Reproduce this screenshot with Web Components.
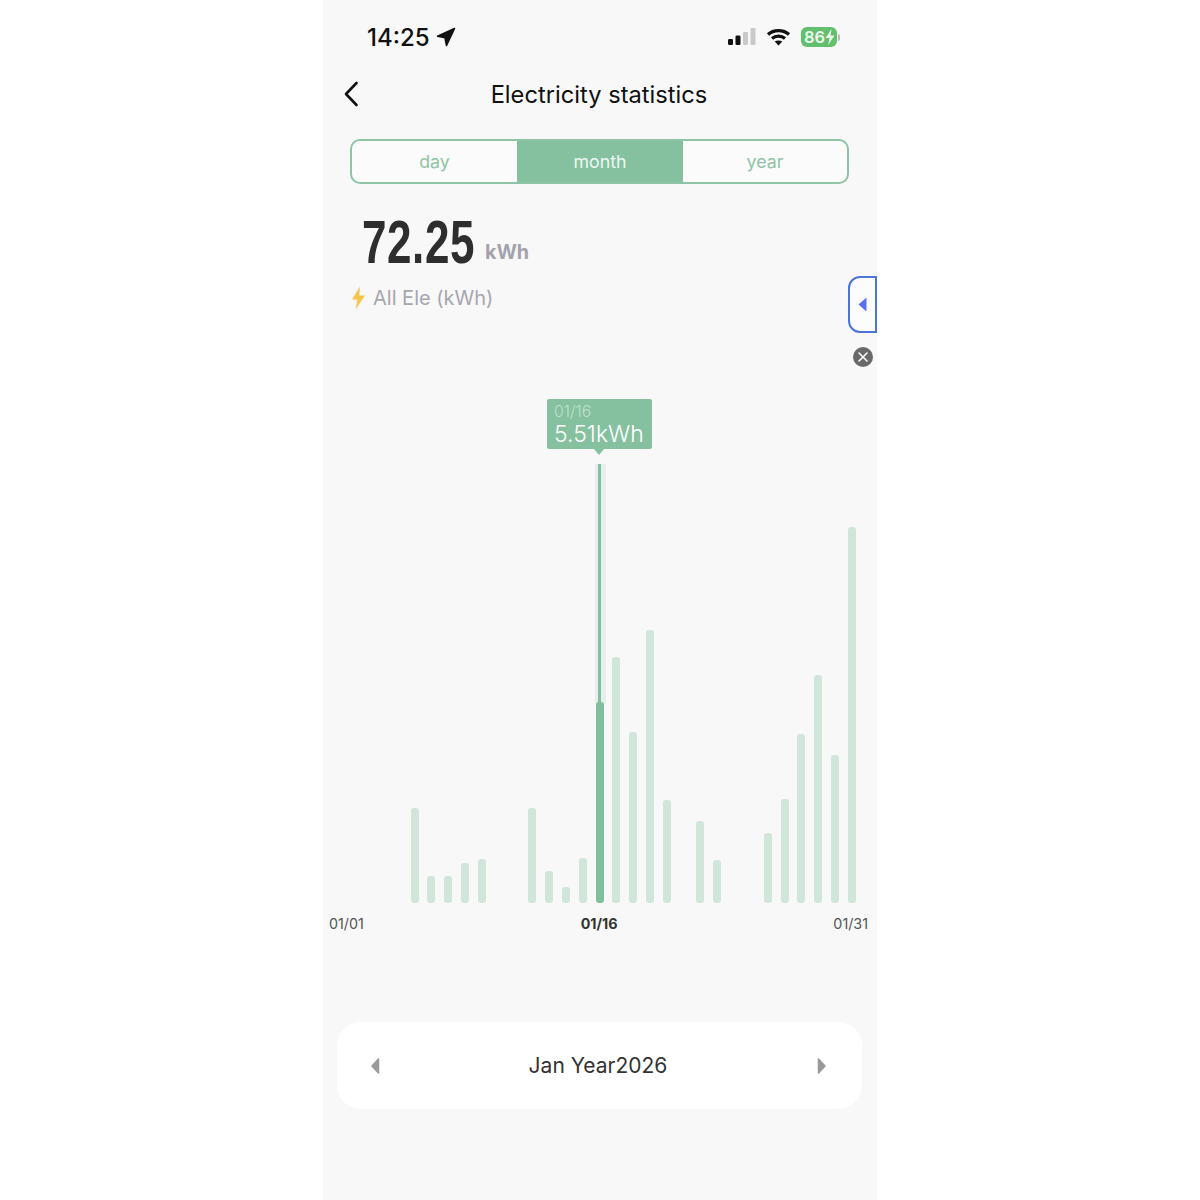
<!DOCTYPE html>
<html lang="en">
<head>
<meta charset="utf-8">
<title>Electricity statistics</title>
<style>
  html, body { margin: 0; background: #fff; }
  body { font-family: Inter, "Noto Sans", sans-serif; }
</style>
</head>
<body>
<phone-screen>
  <status-bar></status-bar>
  <nav-bar>Electricity statistics</nav-bar>
  <seg-tabs items="day,month,year" active="1"></seg-tabs>
  <stat-total value="72.25" unit="kWh" label="All Ele (kWh)"></stat-total>
  <side-tab></side-tab>
  <bar-chart></bar-chart>
  <month-picker>Jan Year2026</month-picker>
</phone-screen>

<script>
class PhoneScreen extends HTMLElement {
    constructor() {
        super();
        this.attachShadow({ mode: 'open' });
        this.shadowRoot.innerHTML = `
            <style>
                :host { display: block; position: relative; width: 554px; height: 1200px; margin: 0 auto; background: #f8f8f8; overflow: hidden; }
            </style>
            <slot></slot>
        `;
    }
}

class StatusBar extends HTMLElement {
    constructor() {
        super();
        this.attachShadow({ mode: 'open' });
        this.shadowRoot.innerHTML = `
            <style>
                :host { display: flex; align-items: center; justify-content: space-between; height: 74px; padding: 0 37px 0 44px; color: #111; }
                .left, .right { display: flex; align-items: center; }
                .time { font-size: 24px; font-weight: 500; letter-spacing: 0; }
                .left svg { margin-left: 6px; }
                .right svg.wifi { margin: 0 10px 0 10px; }
                .batt { display: flex; align-items: center; }
                .pill { width: 36px; height: 20px; border-radius: 6px; background: #62bf6e; color: #eaf7ec; font-size: 16.500px; font-weight: 600; line-height: 20px; padding-left: 3px; box-sizing: border-box; overflow: hidden; white-space: nowrap; display: flex; align-items: center; }
                .nub { width: 2px; height: 7px; background: #bbb; border-radius: 0 2px 2px 0; margin-left: 1px; }
            </style>
            <div class="left">
                <span class="time">14:25</span>
                <svg width="20" height="20" viewBox="0 0 20 20"><path d="M18.500 1.500 L1.500 9.200 L9 10.800 L10.500 18.500 Z" fill="#111" stroke="#111" stroke-width="1.600" stroke-linejoin="round"/></svg>
            </div>
            <div class="right">
                <svg width="28" height="18" viewBox="0 0 28 18">
                    <rect x="0" y="11" width="5" height="6" rx="1.2" fill="#111"/>
                    <rect x="7.500" y="7.500" width="5" height="9.500" rx="1.200" fill="#111"/>
                    <rect x="15" y="4" width="5" height="13" rx="1.200" fill="#c9c9c9"/>
                    <rect x="22.500" y="0" width="5" height="17" rx="1.200" fill="#c9c9c9"/>
                </svg>
                <svg class="wifi" width="25" height="18" viewBox="0 0 24 18" fill="none" stroke="#111" stroke-width="3.200">
                    <path d="M1.500 6.500 C7 1.200 17 1.200 22.500 6.500"/>
                    <path d="M5.500 10.500 C9 7.300 15 7.300 18.500 10.500"/>
                    <path d="M12 17.500 L8.200 13.600 C10.300 12 13.700 12 15.800 13.600 Z" fill="#111" stroke="none"/>
                </svg>
                <div class="batt">
                    <div class="pill">86<svg width="10" height="16" viewBox="0 0 10 16"><path d="M6.500 0 L0.500 9 L4.500 9 L3.200 16 L9.500 6.500 L5.500 6.500 Z" fill="#eaf7ec"/></svg></div>
                    <div class="nub"></div>
                </div>
            </div>
        `;
    }
}

class NavBar extends HTMLElement {
    constructor() {
        super();
        this.attachShadow({ mode: 'open' });
        this.shadowRoot.innerHTML = `
            <style>
                :host { display: grid; grid-template-columns: 60px 1fr 60px; align-items: center; height: 40px; color: #111; }
                svg { margin-left: 20px; }
                .title { text-align: center; font-size: 23.700px; font-weight: 400; margin: 0 2px 0 0; }
            </style>
            <svg width="16" height="28" viewBox="0 0 16 28" fill="none" stroke="#111" stroke-width="2.600" stroke-linecap="round" stroke-linejoin="round"><path d="M13.500 3 L3 14 L13.500 25"/></svg>
            <div class="title"><slot></slot></div>
            <span></span>
        `;
    }
}

class SegTabs extends HTMLElement {
    constructor() {
        super();
        this.attachShadow({ mode: 'open' });
        const active = Number(this.getAttribute('active') || 0);
        const items = (this.getAttribute('items') || '').split(',');
        this.shadowRoot.innerHTML = `
            <style>
                :host { display: grid; grid-template-columns: 165px 166px 164px; height: 45px; box-sizing: border-box; margin: 25px 28px 0 27px; border: 2px solid #8fc4a6; border-radius: 10px; overflow: hidden; background: #fbfbfb; }
                div { display: flex; align-items: center; justify-content: center; font-size: 17.800px; color: #8fc4a6; }
                div.on { background: #85c19f; color: #eef7f2; }
            </style>
            ${items.map((t, i) => `<div class="${i === active ? 'on' : ''}">${t}</div>`).join('')}
        `;
    }
}

class StatTotal extends HTMLElement {
    constructor() {
        super();
        this.attachShadow({ mode: 'open' });
        this.shadowRoot.innerHTML = `
            <style>
                :host { display: block; padding: 28px 0 0 28px; height: 158px; box-sizing: border-box; }
                .row { display: flex; align-items: flex-end; height: 60px; padding-left: 11px; }
                .num { display: inline-block; width: 112px; font-family: "Liberation Sans", sans-serif; font-size: 62px; line-height: 60px; font-weight: 700; color: #2e2e2e; transform: scaleX(.71); transform-origin: left bottom; white-space: nowrap; letter-spacing: .8px; }
                .unit { margin-left: 11px; font-size: 19.700px; font-weight: 700; color: #a3a3ad; line-height: 30px; margin-bottom: 5px; }
                .label { display: flex; align-items: center; height: 30px; margin-top: 11px; font-size: 20px; color: #a6a6ae; }
                svg { margin-right: 7px; }
            </style>
            <div class="row"><span class="num">${this.getAttribute('value')}</span><span class="unit">${this.getAttribute('unit')}</span></div>
            <div class="label">
                <svg width="15" height="24" viewBox="0 0 15 24"><path d="M9 0.500 L1 13.500 L6.500 13.500 L4.500 23.500 L14 9.500 L8.200 9.500 Z" fill="#f7c545"/></svg>
                ${this.getAttribute('label')}
            </div>
        `;
    }
}

class SideTab extends HTMLElement {
    constructor() {
        super();
        this.attachShadow({ mode: 'open' });
        this.shadowRoot.innerHTML = `
            <style>
                :host { display: block; position: absolute; right: 0; top: 276px; width: 29px; height: 92px; }
                .tab { width: 29px; height: 57px; box-sizing: border-box; border: 2px solid #4c74d9; border-radius: 12px 0 0 12px; display: flex; align-items: center; justify-content: center; background: #fcfcfc; }
                .close { position: absolute; left: 5px; top: 71px; }
            </style>
            <div class="tab"><svg width="9" height="15" viewBox="0 0 9 15"><path d="M8.500 0.500 L0.500 7.500 L8.500 14.500 Z" fill="#5a6cf0"/></svg></div>
            <svg class="close" width="20" height="20" viewBox="0 0 20 20"><circle cx="10" cy="10" r="10" fill="#696969"/><path d="M6 6 L14 14 M14 6 L6 14" stroke="#fff" stroke-width="1.600" stroke-linecap="round"/></svg>
        `;
    }
}

class BarChart extends HTMLElement {
    constructor() {
        super();
        this.attachShadow({ mode: 'open' });
        // bar height in px per day, 0 = no reading
        const heights = [0,0,0,0,95,27,27,40,44,0,0,95,32,16,45,201,246,171,273,103,0,82,43,0,0,70,104,169,228,148,376];
        const selected = 15;
        this.shadowRoot.innerHTML = `
            <style>
                :host { display: block; position: relative; }
                .plot { position: relative; display: grid; grid-template-columns: repeat(31, 16.82px); align-items: end; height: 561px; padding-left: 16px; }
                .cell { display: flex; justify-content: center; align-items: flex-end; }
                .bar { width: 8px; background: #d1e6db; border-radius: 3px; }
                .bar.on { background: #7fbf9c; position: relative; z-index: 2; }
                .band { position: absolute; left: 272px; width: 11px; top: 122px; height: 240px; background: #e6eef0; }
                .line { position: absolute; left: 275px; width: 3px; top: 122px; height: 300px; background: #85bfa0; z-index: 1; }
                .tip { position: absolute; left: 224px; top: 57px; width: 105px; height: 50px; box-sizing: border-box; padding: 5px 0 0 7px; background: #85c19f; border-radius: 2px; color: #fff; }
                .tip::after { content: ""; position: absolute; left: 47px; bottom: -6px; border: 5px solid transparent; border-bottom: 0; border-top: 6px solid #85c19f; }
                .tip .d { font-size: 15.800px; line-height: 16px; color: #bfe0cd; font-weight: 300; }
                .tip .v { font-size: 23px; line-height: 29px; white-space: nowrap; font-weight: 300; }
                .axis { display: flex; justify-content: space-between; padding: 12px 9px 0 6px; font-size: 14.300px; line-height: 17px; color: #555; }
                .axis b { color: #333; font-weight: 700; margin-left: 1px; }
            </style>
            <div class="plot">
                <div class="band"></div>
                <div class="line"></div>
                ${heights.map((h, i) => `<div class="cell"><div class="bar ${i === selected ? 'on' : ''}" style="height:${h}px;${h ? '' : 'visibility:hidden'}"></div></div>`).join('')}
                <div class="tip"><div class="d">01/16</div><div class="v">5.51kWh</div></div>
            </div>
            <div class="axis"><span>01/01</span><b>01/16</b><span>01/31</span></div>
        `;
    }
}

class MonthPicker extends HTMLElement {
    constructor() {
        super();
        this.attachShadow({ mode: 'open' });
        this.shadowRoot.innerHTML = `
            <style>
                :host { display: flex; align-items: center; justify-content: space-between; height: 87px; box-sizing: border-box; margin: 90px 15px 0 14px; padding: 0 35px 0 33px; background: #fff; border-radius: 24px; color: #333; font-size: 21px; }
                svg { display: block; }
                span { margin-left: -1px; }
            </style>
            <svg width="10" height="18" viewBox="0 0 10 18"><path d="M8.500 2 L2 9 L8.500 16 Z" fill="#999" stroke="#999" stroke-width="1.500" stroke-linejoin="round"/></svg>
            <span><slot></slot></span>
            <svg width="10" height="18" viewBox="0 0 10 18"><path d="M1.500 2 L8 9 L1.500 16 Z" fill="#999" stroke="#999" stroke-width="1.500" stroke-linejoin="round"/></svg>
        `;
    }
}

customElements.define('phone-screen', PhoneScreen);
customElements.define('status-bar', StatusBar);
customElements.define('nav-bar', NavBar);
customElements.define('seg-tabs', SegTabs);
customElements.define('stat-total', StatTotal);
customElements.define('side-tab', SideTab);
customElements.define('bar-chart', BarChart);
customElements.define('month-picker', MonthPicker);
</script>
</body>
</html>
